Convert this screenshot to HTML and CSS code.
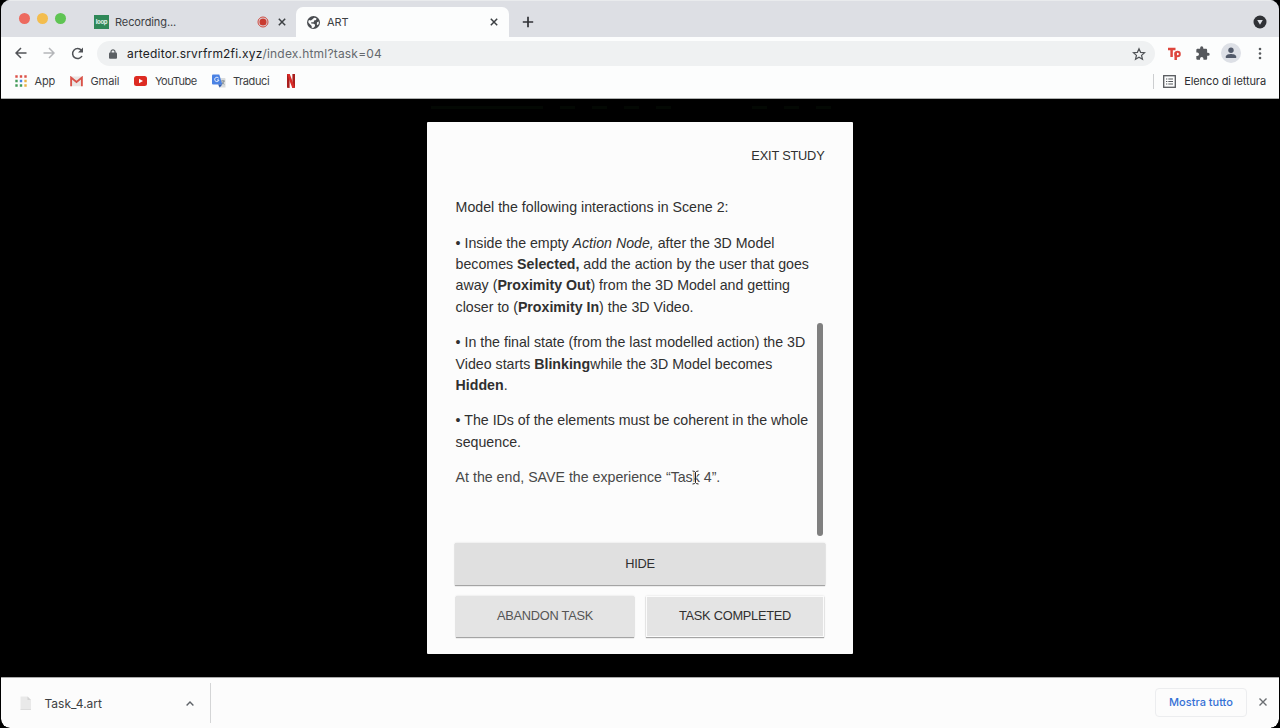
FILE: index.html
```html
<!DOCTYPE html>
<html lang="it">
<head>
<meta charset="utf-8">
<title>ART</title>
<link rel="stylesheet" href="styles.css">
</head>
<body>
<div class="window">
  <header class="tabstrip">
    <div class="lights"><i class="red"></i><i class="yellow"></i><i class="green"></i></div>
    <div class="tab tab-recording">
      <span class="loop-icon">loop</span>
      <span class="tab-title rec-title">Recording...</span>
      <svg class="rec" width="12" height="12" viewBox="0 0 12 12"><circle cx="6" cy="6" r="5" fill="none" stroke="#d0463b"/><circle cx="6" cy="6" r="3.6" fill="#c93a2f"/></svg>
      <svg class="close" width="8" height="8" viewBox="0 0 8 8"><path d="M.8.8l6.4 6.4M7.200.8L.8 7.200" stroke="#3c4043" stroke-width="1.500"/></svg>
    </div>
    <div class="tab tab-active">
      <svg class="globe" width="13" height="13" viewBox="2 2 20 20"><circle cx="12" cy="12" r="10" fill="#4a4d51"/><path fill="#fcfdfd" d="M13 4.500l3.500.8-.5 2.700-3 1-.8 2.500H8.500v2l4 .5 2 1.500-.5 2.500-2.500 2.300-2.300-.3V17.500L4.300 12.200 4 10.500 5 8l3 1 2.500-2z"/><path fill="#fcfdfd" d="M17.500 11.500l2.500-1 .2 3-1.700 2.800-1.500-1.500z"/></svg>
      <span class="tab-title">ART</span>
      <svg class="close" width="8" height="8" viewBox="0 0 8 8"><path d="M.8.8l6.4 6.4M7.200.8L.8 7.200" stroke="#3c4043" stroke-width="1.500"/></svg>
    </div>
    <svg class="plus" width="12" height="12" viewBox="0 0 12 12"><path d="M6 .8v10.400M.8 6h10.400" stroke="#303236" stroke-width="1.700"/></svg>
    <svg class="tabsearch" width="14" height="14" viewBox="0 0 14 14"><circle cx="7" cy="7" r="6.500" fill="#303236"/><path d="M4.200 5h5.600L7 9.700z" fill="#dfe1e6"/></svg>
  </header>

  <div class="toolbar">
    <svg class="back" width="12" height="12" viewBox="0 0 12 12"><path d="M11.500 6H1.200M6 1L1 6l5 5" fill="none" stroke="#505357" stroke-width="1.500"/></svg>
    <svg class="forward" width="12" height="12" viewBox="0 0 12 12"><path d="M.5 6h10.300M6 1l5 5-5 5" fill="none" stroke="#b4b6b9" stroke-width="1.500"/></svg>
    <svg class="reload" width="13" height="13" viewBox="0 0 13 13"><path d="M11 9A5 5 0 1 1 10.400 3.300" fill="none" stroke="#505357" stroke-width="1.500"/><path d="M12 .6v5H7z" fill="#505357"/></svg>
    <div class="omnibox">
      <svg class="lock" width="8" height="10" viewBox="0 0 8 10"><rect y="3.600" width="8" height="6.200" rx="1" fill="#5b5f63"/><path d="M2 4V2.800a2 2 0 0 1 4 0V4" fill="none" stroke="#5b5f63" stroke-width="1.200"/></svg>
      <span class="url"><b>arteditor.srvrfrm2fi.xyz</b>/index.html?task=04</span>
      <svg class="star" width="14" height="14" viewBox="1 1 22 22"><path d="M12 3.600l2.500 5.800 6.300.6-4.800 4.200 1.500 6.200-5.500-3.300-5.500 3.300 1.500-6.200-4.800-4.200 6.300-.6z" fill="none" stroke="#505357" stroke-width="1.900"/></svg>
    </div>
    <svg class="tp" width="13" height="13" viewBox="0 0 13 13"><path d="M0 2h7.500M3.600 2v8M7.700 13V5.300" fill="none" stroke="#de463d" stroke-width="2.500"/><circle cx="9.600" cy="7" r="2.200" fill="none" stroke="#de463d" stroke-width="2"/></svg>
    <svg class="puzzle" width="14" height="14" viewBox="1.500 .5 22 22"><path fill="#55585c" d="M20.500 11H19V7c0-1.100-.9-2-2-2h-4V3.500a2.500 2.500 0 0 0-5 0V5H4c-1.100 0-2 .9-2 2v3.800h1.500a2.700 2.700 0 0 1 0 5.400H2V20c0 1.100.9 2 2 2h3.800v-1.500a2.700 2.700 0 0 1 5.400 0V22H17c1.100 0 2-.9 2-2v-4h1.500a2.500 2.500 0 0 0 0-5z"/></svg>
    <div class="avatar"><svg width="12" height="12" viewBox="0 0 12 12"><circle cx="6" cy="3.300" r="2.700" fill="#525a6a"/><path d="M.8 11V9.600C.8 7.900 4 7.100 6 7.100s5.200.8 5.200 2.500V11z" fill="#525a6a"/></svg></div>
    <svg class="dots" width="4" height="13" viewBox="0 0 4 13"><g fill="#55585c"><circle cx="2" cy="2" r="1.300"/><circle cx="2" cy="6.500" r="1.300"/><circle cx="2" cy="11" r="1.300"/></g></svg>
  </div>

  <nav class="bookmarks">
    <svg class="apps" width="12" height="12" viewBox="0 0 12 12"><g fill="#dc5148"><path d="M.3.3h2.400v2.400H.3zM4.800.3h2.400v2.400H4.800zM9.300.3h2.400v2.400H9.300z"/></g><path d="M.3 4.800h2.400v2.400H.3zM.3 9.300h2.400v2.400H.3zM4.800 9.300h2.400v2.400H4.800z" fill="#439b59"/><path d="M4.800 4.800h2.400v2.400H4.800z" fill="#4585e5"/><path d="M9.300 4.800h2.400v2.400H9.300zM9.300 9.300h2.400v2.400H9.300z" fill="#eab144"/></svg>
    <span class="bm-app">App</span>
    <svg class="gmail" width="13" height="11" viewBox="0 0 14 11"><path d="M1 0h12v10.500H1z" fill="#e9e5e4"/><path d="M1.200 10.500V1.300L7 6l5.800-4.700v9.200" fill="none" stroke="#d95349" stroke-width="2"/></svg>
    <span class="bm-gmail">Gmail</span>
    <svg class="youtube" width="13" height="10" viewBox="0 0 13 10"><rect width="13" height="10" rx="2.500" fill="#dd2b22"/><path d="M5 2.800v4.400L9 5z" fill="#fff"/></svg>
    <span class="bm-youtube">YouTube</span>
    <svg class="translate" width="14" height="14" viewBox="0 0 14 14"><path d="M5 4h7.500q1 0 1 1v8.500H7z" fill="#d9dcdd"/><path d="M1 .5h6.300l3 10H1q-1 0-1-1v-8q0-1 1-1z" fill="#4a82e4"/><path d="M6.200 10.500h4.100L7.700 13.500z" fill="#315caf"/><path d="M6.700 4.200A2.200 2.200 0 1 0 7 6H5" fill="none" stroke="#e9f0fc"/><path d="M9 7h4M11 6v1m1 0q-.5 2-2.200 3.300M10 8.300l2.400 2.200" fill="none" stroke="#7b858e" stroke-width=".8"/></svg>
    <span class="bm-traduci">Traduci</span>
    <svg class="netflix" width="8" height="14" viewBox="0 0 8 14"><path d="M0 0h2.600v14L0 13.700zM5.400 0H8v13.700L5.400 14z" fill="#a91e1c"/><path d="M0 0h2.700L8 13.700 5.300 14z" fill="#d82b28"/></svg>
    <div class="reading">
      <svg width="13" height="13" viewBox="0 0 13 13"><rect x=".7" y=".7" width="11.600" height="11.600" fill="none" stroke="#55585c" stroke-width="1.300"/><path d="M3 4h1.300M5.300 4H10M3 6.500h1.300M5.300 6.500H10M3 9h1.300M5.300 9H10" stroke="#55585c"/></svg>
      <span class="bm-reading">Elenco di lettura</span>
    </div>
  </nav>

  <main class="page">
    <div class="backdrop"><i class="wide"></i><i></i><i></i><i></i><i></i><i class="gap"></i><i></i><i></i></div>
    <section class="dialog">
      <div class="exit"><span>EXIT STUDY</span></div>
      <div class="body">
        <div class="copy">
          <p>Model the following interactions in Scene 2:</p>
          <p>• Inside the empty <em>Action Node,</em> after the 3D Model<br>
          becomes <b>Selected,</b> add the action by the user that goes<br>
          away (<b>Proximity Out</b>) from the 3D Model and getting<br>
          closer to (<b>Proximity In</b>) the 3D Video.</p>
          <p>• In the final state (from the last modelled action) the 3D<br>
          Video starts <b>Blinking</b>while the 3D Model becomes<br>
          <b>Hidden</b>.</p>
          <p>• The IDs of the elements must be coherent in the whole<br>
          sequence.</p>
          <p class="last">At the end, SAVE the experience “Task 4”.
            <svg class="cursor" width="7" height="15" viewBox="0 0 7 15"><path d="M.5 1Q3 1 3.500 2.500 4 1 6.500 1M3.500 2.500v10M.5 14q2.500 0 3-1.500.5 1.500 3 1.500M2 9h3" fill="none" stroke="#fff" stroke-width="2.200"/><path d="M.5 1Q3 1 3.500 2.500 4 1 6.500 1M3.500 2.500v10M.5 14q2.500 0 3-1.500.5 1.500 3 1.500M2 9h3" fill="none" stroke="#222" stroke-width="1"/></svg></p>
        </div>
        <div class="thumb"></div>
      </div>
      <div class="btn hide"><span>HIDE</span></div>
      <div class="row">
        <div class="btn abandon"><span>ABANDON TASK</span></div>
        <div class="btn completed"><span>TASK COMPLETED</span></div>
      </div>
    </section>
  </main>

  <footer class="shelf">
    <div class="download">
      <svg width="12" height="14" viewBox="0 0 12 14"><path d="M.5.500h7L11 4v9.500H.5z" fill="#e9e9e9"/><path d="M7.500.5V4H11z" fill="#d4d4d4"/><path d="M.5 13.500H11" stroke="#dcdcdc"/></svg>
      <span class="file">Task_4.art</span>
      <svg class="chev" width="8" height="5" viewBox="0 0 8 5"><path d="M.6 4.400L4 1l3.400 3.400" fill="none" stroke="#5f6368" stroke-width="1.400"/></svg>
    </div>
    <div class="showall"><span>Mostra tutto</span></div>
    <svg class="shelf-close" width="8" height="8" viewBox="0 0 8 8"><path d="M.5.5l7 7M7.500.5l-7 7" stroke="#6b6e72" stroke-width="1.400"/></svg>
  </footer>
</div>
</body>
</html>
```
FILE: styles.css
```css
* { box-sizing: border-box; }
body { margin: 0; background: #000; overflow: hidden; font-family: Inter, Roboto, sans-serif; font-size: 11px; color: #3c4043; }
svg { display: block; flex: none; }
span { white-space: nowrap; }
.window { width: 1278px; height: 728px; margin: 0 1px; display: flex; flex-direction: column; border-radius: 9px; overflow: hidden; background: #000; }

.tabstrip { height: 37px; flex: none; background: #dddfe4; border-top: 1px solid #e9ebed; display: flex; padding-left: 18px; }
.lights { display: flex; gap: 7px; padding-top: 12px; width: 66px; }
.lights i { width: 11px; height: 11px; border-radius: 50%; }
.red { background: #ed6a5f; }
.yellow { background: #f3bd4e; }
.green { background: #5fc453; }
.tab { display: flex; align-items: center; height: 30px; margin-top: 6px; }
.tab-recording { width: 211px; padding: 0 10px 0 9px; }
.loop-icon { width: 15px; height: 14px; background: #2f8858; color: #e4f3eb; font-size: 6px; font-weight: 700; line-height: 13px; text-align: center; letter-spacing: -.3px; }
.rec-title { margin-left: 6px; letter-spacing: -.1px; }
.tab-title { line-height: 16px; }
.rec { margin-left: auto; margin-right: 9px; }
.tab-active { width: 213px; padding: 0 11px; background: #fcfdfd; border-radius: 7px 7px 0 0; }
.tab-active .tab-title { margin-left: 7px; letter-spacing: -.1px; }
.tab-active .close { margin-left: auto; }
.plus { margin: 15px 0 0 13px; }
.tabsearch { margin: 14px 12.500px 0 auto; }

.toolbar { height: 32px; flex: none; background: #fcfdfd; display: flex; align-items: center; padding-left: 13.500px; }
.forward { margin-left: 16px; }
.reload { margin-left: 16.500px; }
.omnibox { width: 1058px; height: 25px; margin: 1px 0 0 13px; border-radius: 13px; background: #eff1f2; display: flex; align-items: center; padding: 0 9.500px 0 11.500px; }
.url { margin-left: 10.500px; font-size: 12px; letter-spacing: .19px; color: #65696e; line-height: 18px; }
.url b { font-weight: 400; color: #202124; }
.star { margin-left: auto; }
.tp { margin-left: 13px; }
.puzzle { margin-left: 15px; }
.avatar { width: 20px; height: 20px; border-radius: 50%; background: #dde0e6; margin-left: 11px; display: flex; align-items: center; justify-content: center; }
.dots { margin-left: 16.500px; }

.bookmarks { height: 30px; flex: none; background: #fcfdfd; border-bottom: 1px solid #aeb1b0; display: flex; align-items: center; padding: 0 13px 5px 13.500px; }
.bookmarks span { line-height: 16px; flex: none; }
.bm-app { margin-left: 8px; width: 35px; letter-spacing: -.2px; }
.bm-gmail { margin-left: 8px; width: 43.500px; letter-spacing: -.1px; }
.bm-youtube { margin-left: 8px; width: 56.500px; letter-spacing: -.5px; }
.bm-traduci { margin-left: 7.500px; width: 53.500px; letter-spacing: -.4px; }
.reading { margin-left: auto; height: 15px; border-left: 1px solid #ccced0; display: flex; align-items: center; padding-left: 9px; color: #2c2e31; }
.bm-reading { margin-left: 8px; letter-spacing: -.1px; }

.page { height: 578px; flex: none; background: #000; display: flex; flex-direction: column; padding-left: 426px; }
.backdrop { height: 23px; flex: none; display: flex; gap: 17px; padding: 7px 0 0 4px; }
.backdrop i { width: 15px; height: 3px; background: #030803; }
.backdrop .wide { width: 112px; }
.backdrop .gap { margin-left: 64px; }
.dialog { width: 426px; height: 532px; flex: none; background: #fcfcfc; border-radius: 1px; padding: 24px 28px 0; font-family: "Liberation Sans", Arial, sans-serif; color: #303030; display: flex; flex-direction: column; }
.exit { height: 51px; display: flex; justify-content: flex-end; font-size: 12.800px; letter-spacing: -.2px; line-height: 19px; padding-right: .5px; flex: none; }
.body { height: 339px; flex: none; display: flex; justify-content: space-between; font-size: 14.200px; line-height: 21.300px; }
.copy { white-space: nowrap; padding: .4px 0 0 .6px; }
.copy p { margin: 0 0 14.200px; }
.copy .last { position: relative; color: #484848; }
.cursor { position: absolute; left: 236px; top: 3px; }
.thumb { width: 6px; height: 213px; margin: 126px 2px 0 0; background: #808080; border-radius: 3px; }
.btn { height: 42px; background: #e0e0e0; box-shadow: 0 1px 1px rgba(0,0,0,.32), 0 0 2px rgba(0,0,0,.12); display: flex; align-items: center; justify-content: center; font-size: 12.800px; letter-spacing: -.25px; padding-bottom: 2px; flex: none; }
.hide { margin: 7px 0 0; }
.row { display: flex; justify-content: space-between; margin-top: 11px; padding: 0 1px; }
.row .btn { height: 41px; width: 178px; background: #e4e4e4; }
.abandon { color: #555; }
.completed { border: 1px solid #fbfbfb; }

.shelf { height: 51px; flex: none; background: #fcfcfc; border-top: 1px solid #aaa; border-radius: 0 0 9px 9px; display: flex; align-items: center; }
.download { width: 210px; height: 40px; border-right: 1px solid #d4d5d6; display: flex; align-items: center; padding: 0 16px 0 19px; }
.file { margin-left: 12.500px; font-size: 12px; }
.chev { margin-left: auto; }
.showall { width: 92px; height: 29px; margin: -2px 12px 0 auto; border: 1px solid #ecedef; border-radius: 4px; color: #3571d6; font-weight: 500; display: flex; align-items: center; justify-content: center; }
.shelf-close { margin: -2px 12px 0 0; }
```
